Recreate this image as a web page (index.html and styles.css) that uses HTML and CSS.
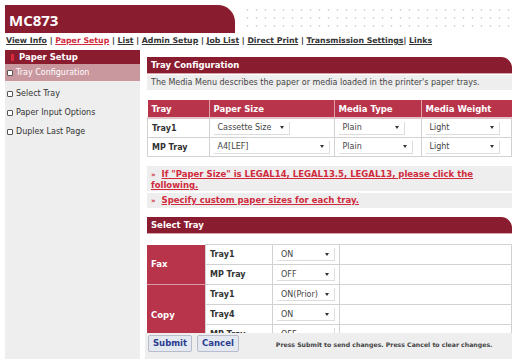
FILE: index.html
```html
<!DOCTYPE html>
<html lang="en">
<head>
    <meta charset="UTF-8">
    <title>MC873 - Paper Setup</title>
    <link rel="stylesheet" href="styles.css">
</head>
<body>
    <div class="top">
        <div class="title-bar">MC873</div>
        <div class="dots"></div>
    </div>
    <div class="nav">
        <a href="#">View Info</a> | <a href="#" class="current">Paper Setup</a> | <a href="#">List</a> | <a href="#">Admin Setup</a> | <a href="#">Job List</a> | <a href="#">Direct Print</a> | <a href="#">Transmission Settings</a>| <a href="#">Links</a>
    </div>

    <div class="layout">
        <div class="sidebar">
            <div class="side-head"><span class="mark"></span>Paper Setup</div>
            <div class="side-item active"><span class="box"></span>Tray Configuration</div>
            <div class="side-item"><span class="box"></span>Select Tray</div>
            <div class="side-item"><span class="box"></span>Paper Input Options</div>
            <div class="side-item"><span class="box"></span>Duplex Last Page</div>
        </div>

        <div class="main">
            <div class="section-head">Tray Configuration</div>
            <div class="desc">The Media Menu describes the paper or media loaded in the printer's paper trays.</div>

            <table class="grid tray-table">
                <tr>
                    <th class="c-tray">Tray</th>
                    <th class="c-size">Paper Size</th>
                    <th class="c-type">Media Type</th>
                    <th>Media Weight</th>
                </tr>
                <tr>
                    <td class="label">Tray1</td>
                    <td><span class="select w76">Cassette Size <i class="arrow"></i></span></td>
                    <td><span class="select w66">Plain <i class="arrow"></i></span></td>
                    <td><span class="select w74">Light <i class="arrow"></i></span></td>
                </tr>
                <tr>
                    <td class="label">MP Tray</td>
                    <td><span class="select w116">A4[LEF] <i class="arrow"></i></span></td>
                    <td><span class="select w74">Plain <i class="arrow"></i></span></td>
                    <td><span class="select w74">Light <i class="arrow"></i></span></td>
                </tr>
            </table>

            <div class="links">
                <div class="link-row"><a href="#">If "Paper Size" is LEGAL14, LEGAL13.5, LEGAL13, please click the following.</a></div>
                <div class="link-row"><a href="#">Specify custom paper sizes for each tray.</a></div>
            </div>

            <div class="section-head">Select Tray</div>

            <table class="grid select-table">
                <tr>
                    <th class="group" rowspan="2">Fax</th>
                    <td class="label c-name">Tray1</td>
                    <td class="c-val"><span class="select w56">ON <i class="arrow"></i></span></td>
                    <td></td>
                </tr>
                <tr>
                    <td class="label">MP Tray</td>
                    <td><span class="select w56">OFF <i class="arrow"></i></span></td>
                    <td></td>
                </tr>
                <tr>
                    <th class="group" rowspan="3">Copy</th>
                    <td class="label">Tray1</td>
                    <td><span class="select w56">ON(Prior) <i class="arrow"></i></span></td>
                    <td></td>
                </tr>
                <tr>
                    <td class="label">Tray4</td>
                    <td><span class="select w56">ON <i class="arrow"></i></span></td>
                    <td></td>
                </tr>
                <tr>
                    <td class="label">MP Tray</td>
                    <td><span class="select w56">OFF <i class="arrow"></i></span></td>
                    <td></td>
                </tr>
            </table>
        </div>
    </div>

    <div class="footer">
        <button class="btn">Submit</button>
        <button class="btn">Cancel</button>
        <span class="hint">Press Submit to send changes. Press Cancel to clear changes.</span>
    </div>
</body>
</html>
```

FILE: styles.css
```css
body {
    margin: 0;
    padding: 5px 3px 0 5px;
    font-family: "DejaVu Sans", Verdana, sans-serif;
    font-size: 8px;
    color: #333;
    background: #fff;
}
.top {
    display: flex;
    height: 28px;
}
.title-bar {
    width: 226px;
    padding-left: 4px;
    background: #8a1c30;
    color: #fff;
    font-family: "Open Sans", "DejaVu Sans", sans-serif;
    font-size: 15px;
    font-weight: bold;
    line-height: 31px;
    border-top-right-radius: 17px;
    flex-shrink: 0;
    margin-right: 8px;
}
.dots {
    flex: 1;
    background-image: radial-gradient(circle, #d6d6d6 0.8px, transparent 1.2px);
    background-size: 9px 8px;
    background-position: 0 1px;
}
.nav {
    padding: 3px 0 0 1px;
    height: 14px;
    font-size: 7.8px;
    font-weight: bold;
    color: #333;
}
.nav a {
    color: #333;
}
.nav a.current {
    color: #d02a3c;
}
.layout {
    display: flex;
    gap: 7px;
}
.sidebar {
    width: 135px;
    flex-shrink: 0;
    background: #eeeeee;
    height: 310px;
}
.side-head {
    background: #8a1c30;
    color: #fff;
    font-weight: bold;
    font-size: 8.5px;
    height: 14px;
    line-height: 14px;
    padding-left: 6px;
    display: flex;
    align-items: center;
}
.mark {
    width: 3px;
    height: 7px;
    background: #d8283c;
    margin-right: 5px;
}
.side-item {
    height: 19px;
    display: flex;
    align-items: center;
    padding-left: 2px;
    color: #333;
    font-size: 8px;
}
.side-item.active {
    background: #c9979e;
    color: #fff;
    height: 17px;
    margin-bottom: 3px;
}
.box {
    width: 4px;
    height: 4px;
    border: 1px solid #555;
    border-radius: 1px;
    background: #fff;
    margin-right: 3px;
}
.main {
    flex: 1;
    padding-top: 7px;
}
.section-head {
    background: #8a1c30;
    color: #fff;
    font-weight: bold;
    font-size: 8.5px;
    height: 16px;
    line-height: 16px;
    padding-left: 4px;
    border-top-right-radius: 11px;
    border-bottom: 1px solid #d7a3ab;
}
.desc {
    background: #eeeeee;
    height: 15px;
    line-height: 15px;
    padding-left: 4px;
    font-size: 8px;
    color: #444;
    margin-top: 1px;
}
.grid {
    width: 100%;
    border-collapse: collapse;
    font-size: 8px;
}
.grid th {
    background: #b8344b;
    color: #fff;
    font-weight: bold;
    text-align: left;
    padding: 0 4px;
}
.grid td {
    border: 1px solid #d2d2d2;
    padding: 0 4px;
    height: 18px;
    background: #fff;
}
.tray-table {
    margin-top: 10px;
}
.tray-table th {
    height: 17px;
    border-left: 1px solid #e2a0aa;
    border-bottom: 2px solid #e2c5ca;
    font-size: 8.5px;
}
.tray-table th:first-child {
    border-left: none;
}
.c-tray {
    width: 53px;
}
.c-size {
    width: 112px;
}
.c-type {
    width: 78px;
}
.label {
    font-weight: bold;
    color: #333;
}
.select {
    display: inline-flex;
    align-items: center;
    justify-content: space-between;
    height: 13px;
    padding: 0 5px 0 4px;
    background: #fff;
    border-right: 1px solid #dcdcdc;
    border-bottom: 1px solid #dcdcdc;
    color: #444;
    box-sizing: border-box;
    vertical-align: middle;
}
.w56 { width: 58px; }
.w66 { width: 66px; }
.w74 { width: 74px; }
.w76 { width: 76px; }
.w116 { width: 116px; }
.arrow {
    width: 0;
    height: 0;
    border-left: 2.5px solid transparent;
    border-right: 2.5px solid transparent;
    border-top: 3px solid #333;
}
.links {
    margin-top: 9px;
    background: #eeeeee;
    padding: 1px 0;
    margin-bottom: 9px;
}
.link-row {
    padding: 2px 4px 1px 4px;
    font-size: 8.5px;
    line-height: 10px;
    border-bottom: 2px solid #fff;
}
.link-row:last-child {
    border-bottom: none;
}
.link-row a {
    color: #d02a3c;
    font-weight: bold;
}
.link-row a::before {
    content: "\00bb";
    display: inline-block;
    font-size: 7px;
    margin-right: 6px;
}
.select-table {
    margin-top: 10px;
}
.select-table td {
    height: 19px;
}
.select-table .group {
    width: 50px;
    font-size: 8.5px;
    border-bottom: 1px solid #d99aa5;
}
.c-name {
    width: 58px;
}
.c-val {
    width: 55px;
}
.footer {
    position: fixed;
    left: 145px;
    right: 3px;
    bottom: 0;
    height: 26px;
    background: #eeeeee;
    display: flex;
    align-items: center;
    padding-left: 3px;
    gap: 5px;
}
.btn {
    font-family: "DejaVu Sans", Verdana, sans-serif;
    font-size: 8.5px;
    font-weight: bold;
    color: #2a3b8f;
    background: #e4e8f0;
    border: 1px solid #b8bccc;
    border-radius: 2px;
    height: 17px;
    padding: 0 4px;
    margin-top: -6px;
}
.hint {
    font-size: 6.2px;
    font-weight: bold;
    color: #444;
    margin-left: 32px;
    margin-top: -4px;
}
```
